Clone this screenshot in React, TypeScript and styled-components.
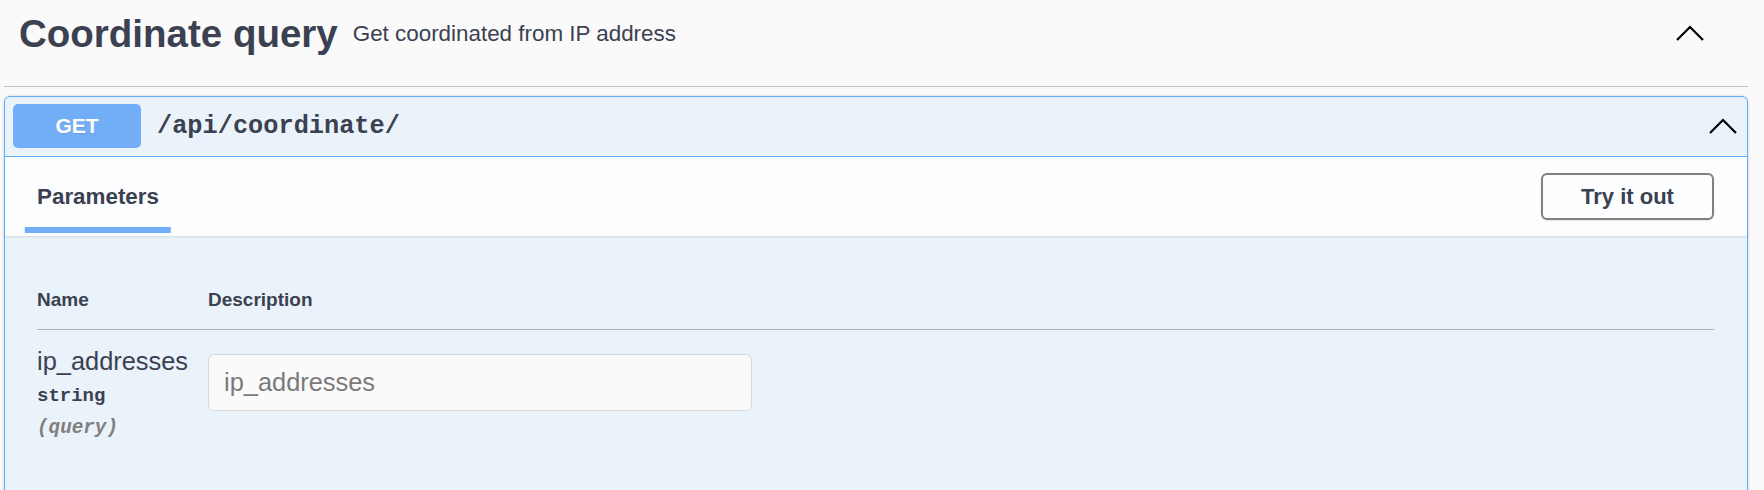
import React from "react";
import styled, { createGlobalStyle } from "styled-components";

const GlobalStyle = createGlobalStyle`
  html, body { margin: 0; padding: 0; background: #fafafa; }
  body { font-family: "Liberation Sans", Arial, sans-serif; color: #3b4151; }
  * { box-sizing: border-box; }
`;

const Page = styled.div`
  width: 1744px;
  margin-left: 4px;
  min-height: 490px;
`;

const TagHeader = styled.div`
  height: 87px;
  display: flex;
  align-items: center;
  padding: 12px 44px 30px 15px;
  border-bottom: 1px solid rgba(59, 65, 81, 0.3);
`;

const TagTitle = styled.h3`
  margin: 0;
  font-size: 38.5px;
  line-height: 44px;
  font-weight: 700;
  white-space: nowrap;
  color: #3b4151;
`;

const TagDescription = styled.small`
  flex: 1;
  font-size: 22.4px;
  font-weight: 400;
  padding: 0 15px;
  color: #3b4151;
`;

const ArrowButton = styled.button<{ $shift?: number }>`
  border: none;
  background: none;
  padding: 0;
  margin: 0 0 ${(p) => p.$shift ?? 0}px 0;
  display: flex;
  cursor: pointer;
  color: #000;
`;

const Opblock = styled.div`
  margin-top: 9px;
  border: 1px solid #61affe;
  border-radius: 6px;
  background: rgba(97, 175, 254, 0.1);
  box-shadow: 0 0 3px rgba(0, 0, 0, 0.19);
`;

const Summary = styled.div`
  display: flex;
  align-items: center;
  padding: 7px 10px 8px 8px;
  border-bottom: 1px solid #61affe;
`;

const MethodBadge = styled.span`
  width: 128px;
  height: 44px;
  display: flex;
  align-items: center;
  justify-content: center;
  background: #72aef8;
  color: #fff;
  font-size: 21px;
  font-weight: 700;
  border-radius: 5px;
  text-shadow: 0 1px 0 rgba(0, 0, 0, 0.1);
`;

const PathText = styled.span`
  flex: 1;
  padding: 0 16px;
  font-family: "Liberation Mono", "Courier New", monospace;
  font-size: 25.3px;
  font-weight: 700;
  color: #3b4151;
`;

const SectionHeader = styled.div`
  height: 79px;
  display: flex;
  align-items: center;
  justify-content: space-between;
  padding: 0 33px 0 32px;
  background: rgba(255, 255, 255, 0.8);
  box-shadow: 0 1px 2px rgba(0, 0, 0, 0.1);
`;

const TabTitle = styled.h4`
  margin: 0;
  font-size: 22.4px;
  font-weight: 700;
  color: #3b4151;

  span {
    position: relative;
  }
  span::after {
    content: "";
    position: absolute;
    left: 50%;
    transform: translateX(-50%);
    width: 120%;
    height: 6px;
    bottom: -24px;
    background: #72aef8;
  }
`;

const TryButton = styled.button`
  width: 173px;
  height: 47px;
  border: 2px solid #808080;
  border-radius: 6px;
  background: transparent;
  box-shadow: 0 1px 2px rgba(0, 0, 0, 0.1);
  font-family: "Liberation Sans", Arial, sans-serif;
  font-size: 22px;
  font-weight: 700;
  color: #3b4151;
  cursor: pointer;
`;

const TableContainer = styled.div`
  padding: 35px 33px 60px 32px;
`;

const Table = styled.table`
  width: 100%;
  border-collapse: collapse;
`;

const Th = styled.th<{ $width?: number }>`
  text-align: left;
  font-size: 19px;
  font-weight: 700;
  padding: 18px 0;
  color: #3b4151;
  border-bottom: 1px solid rgba(59, 65, 81, 0.2);
  width: ${(p) => (p.$width ? `${p.$width}px` : "auto")};
`;

const Td = styled.td`
  vertical-align: top;
  padding: 17px 0 15px;
`;

const ParamName = styled.div`
  font-size: 25.4px;
  font-weight: 400;
  color: #3b4151;
`;

const ParamType = styled.div`
  font-family: "Liberation Mono", "Courier New", monospace;
  font-size: 19px;
  font-weight: 700;
  padding: 9px 0 10px;
  color: #3b4151;
`;

const ParamIn = styled.div`
  font-family: "Liberation Mono", "Courier New", monospace;
  font-size: 19.3px;
  font-weight: 700;
  font-style: italic;
  color: #808080;
`;

const TextInput = styled.input`
  display: block;
  width: 544px;
  height: 57px;
  margin: 7px 0;
  padding: 0 15px;
  border: 1.5px solid #d9d9d9;
  border-radius: 6px;
  background: #fafafa;
  font-family: "Liberation Sans", Arial, sans-serif;
  font-size: 25.4px;
  color: #3b4151;
  outline: none;

  &::placeholder {
    color: #7a7a7a;
  }
`;

const Chevron = () => (
  <svg width="28" height="16" viewBox="0 0 28 16" fill="none">
    <polyline
      points="1,15 14,2 27,15"
      stroke="currentColor"
      strokeWidth="2.2"
      fill="none"
    />
  </svg>
);

export default function App() {
  return (
    <>
      <GlobalStyle />
      <Page>
        <TagHeader>
          <TagTitle>Coordinate query</TagTitle>
          <TagDescription>Get coordinated from IP address</TagDescription>
          <ArrowButton $shift={3} aria-label="collapse">
            <Chevron />
          </ArrowButton>
        </TagHeader>
        <Opblock>
          <Summary>
            <MethodBadge>GET</MethodBadge>
            <PathText>/api/coordinate/</PathText>
            <ArrowButton aria-label="collapse operation">
              <Chevron />
            </ArrowButton>
          </Summary>
          <SectionHeader>
            <TabTitle>
              <span>Parameters</span>
            </TabTitle>
            <TryButton>Try it out</TryButton>
          </SectionHeader>
          <TableContainer>
            <Table>
              <thead>
                <tr>
                  <Th $width={171}>Name</Th>
                  <Th>Description</Th>
                </tr>
              </thead>
              <tbody>
                <tr>
                  <Td>
                    <ParamName>ip_addresses</ParamName>
                    <ParamType>string</ParamType>
                    <ParamIn>(query)</ParamIn>
                  </Td>
                  <Td>
                    <TextInput type="text" placeholder="ip_addresses" />
                  </Td>
                </tr>
              </tbody>
            </Table>
          </TableContainer>
        </Opblock>
      </Page>
    </>
  );
}
